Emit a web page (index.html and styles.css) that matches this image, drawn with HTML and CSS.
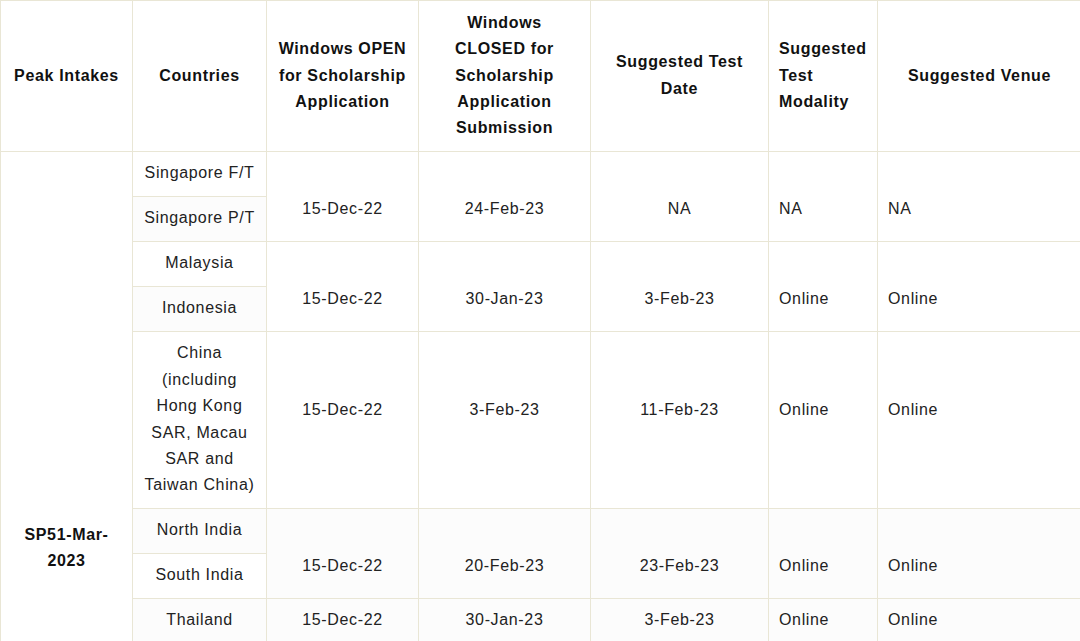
FILE: index.html
```html
<!DOCTYPE html>
<html>
<head>
<meta charset="utf-8">
<link rel="stylesheet" href="styles.css">
</head>
<body>
<table class="schedule">
  <colgroup>
    <col class="c-intake">
    <col class="c-country">
    <col class="c-open">
    <col class="c-closed">
    <col class="c-date">
    <col class="c-mode">
    <col class="c-venue">
  </colgroup>
  <thead>
    <tr>
      <th>Peak Intakes</th>
      <th>Countries</th>
      <th>Windows OPEN for Scholarship Application</th>
      <th class="narrow">Windows CLOSED for Scholarship Application Submission</th>
      <th>Suggested Test Date</th>
      <th class="left">Suggested Test Modality</th>
      <th>Suggested Venue</th>
    </tr>
  </thead>
  <tbody>
    <tr>
      <td rowspan="8" class="intake">SP51-Mar-2023</td>
      <td class="country">Singapore F/T</td>
      <td rowspan="2" class="low">15-Dec-22</td>
      <td rowspan="2" class="low">24-Feb-23</td>
      <td rowspan="2" class="low">NA</td>
      <td rowspan="2" class="low left">NA</td>
      <td rowspan="2" class="low left">NA</td>
    </tr>
    <tr>
      <td class="country">Singapore P/T</td>
    </tr>
    <tr>
      <td class="country">Malaysia</td>
      <td rowspan="2" class="low">15-Dec-22</td>
      <td rowspan="2" class="low">30-Jan-23</td>
      <td rowspan="2" class="low">3-Feb-23</td>
      <td rowspan="2" class="low left">Online</td>
      <td rowspan="2" class="low left">Online</td>
    </tr>
    <tr>
      <td class="country">Indonesia</td>
    </tr>
    <tr>
      <td class="country">China (including Hong Kong SAR, Macau SAR and Taiwan China)</td>
      <td class="high">15-Dec-22</td>
      <td class="high">3-Feb-23</td>
      <td class="high">11-Feb-23</td>
      <td class="high left">Online</td>
      <td class="high left">Online</td>
    </tr>
    <tr>
      <td class="country">North India</td>
      <td rowspan="2" class="low">15-Dec-22</td>
      <td rowspan="2" class="low">20-Feb-23</td>
      <td rowspan="2" class="low">23-Feb-23</td>
      <td rowspan="2" class="low left">Online</td>
      <td rowspan="2" class="low left">Online</td>
    </tr>
    <tr>
      <td class="country">South India</td>
    </tr>
    <tr>
      <td class="country">Thailand</td>
      <td>15-Dec-22</td>
      <td>30-Jan-23</td>
      <td>3-Feb-23</td>
      <td class="left">Online</td>
      <td class="left">Online</td>
    </tr>
  </tbody>
</table>
</body>
</html>
```

FILE: styles.css
```css
html, body {
  margin: 0;
  padding: 0;
  background: #ffffff;
  overflow: hidden;
}

.schedule {
  border-collapse: collapse;
  table-layout: fixed;
  width: 1081px;
  font-family: "Liberation Sans", Arial, sans-serif;
  font-size: 16px;
  line-height: 26.4px;
  letter-spacing: 0.65px;
  color: #222222;
}

.c-intake { width: 132px; }
.c-country { width: 134px; }
.c-open { width: 152px; }
.c-closed { width: 172px; }
.c-date { width: 178px; }
.c-mode { width: 109px; }
.c-venue { width: 204px; }

.schedule th,
.schedule td {
  border: 1px solid #e9e6d5;
  padding: 8.8px 10px;
  text-align: center;
  vertical-align: middle;
}

.schedule th {
  font-weight: bold;
  color: #111111;
}

.schedule th.narrow {
  padding-left: 14px;
  padding-right: 14px;
}

.schedule tbody tr:nth-child(even) td {
  background: #fcfcfc;
}

.schedule .left {
  text-align: left;
}

.schedule td.low {
  padding-top: 35.2px;
}

.schedule td.high {
  padding-bottom: 26.8px;
}

.schedule td.intake {
  background: #ffffff;
  font-weight: bold;
  color: #111111;
  vertical-align: top;
  padding-top: 370px;
}
```
